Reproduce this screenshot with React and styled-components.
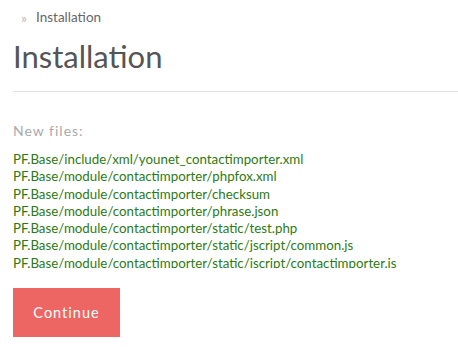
import styled, { createGlobalStyle } from 'styled-components';

const GlobalStyle = createGlobalStyle`
  html, body {
    margin: 0;
    padding: 0;
    background: #fff;
    font-family: Lato, "Open Sans", sans-serif;
    overflow: hidden;
  }
`;

const files = [
  'PF.Base/include/xml/younet_contactimporter.xml',
  'PF.Base/module/contactimporter/phpfox.xml',
  'PF.Base/module/contactimporter/checksum',
  'PF.Base/module/contactimporter/phrase.json',
  'PF.Base/module/contactimporter/static/test.php',
  'PF.Base/module/contactimporter/static/jscript/common.js',
  'PF.Base/module/contactimporter/static/jscript/contactimporter.js',
  'PF.Base/module/contactimporter/static/jscript/jquery.js',
];

const Page = styled.div`
  padding: 8px 0 0 13px;
`;

const Breadcrumb = styled.div`
  display: flex;
  align-items: center;
  gap: 9px;
  height: 18px;
  padding-left: 8px;
  font-size: 13.5px;
  color: #666;
`;

const Chevron = styled.span`
  color: #bbb;
  font-size: 14px;
`;

const Title = styled.h1`
  margin: 10px 0 0;
  font-weight: 400;
  font-size: 31px;
  line-height: 40px;
  color: #555;
`;

const Rule = styled.hr`
  margin: 15px 0 0;
  border: 0;
  border-top: 1px solid #e4e4e4;
`;

const Label = styled.div`
  margin-top: 30px;
  font-size: 14px;
  letter-spacing: 1px;
  color: #aaa;
`;

const FileList = styled.div`
  margin-top: 12px;
  height: 117px;
  overflow: hidden;
`;

const FileRow = styled.div`
  font-size: 13.3px;
  line-height: 17.3px;
  color: #2d7a14;
  white-space: nowrap;
`;

const Button = styled.button`
  display: block;
  margin-top: 20px;
  width: 107px;
  height: 49px;
  border: 0;
  background: #ee6664;
  color: #fff;
  font-family: inherit;
  font-size: 14.5px;
  letter-spacing: 1px;
  cursor: pointer;
`;

export default function App() {
  return (
    <>
      <GlobalStyle />
      <Page>
        <Breadcrumb>
          <Chevron>»</Chevron>
          <span>Installation</span>
        </Breadcrumb>
        <Title>Installation</Title>
        <Rule />
        <Label>New files:</Label>
        <FileList>
          {files.map((f) => (
            <FileRow key={f}>{f}</FileRow>
          ))}
        </FileList>
        <Button>Continue</Button>
      </Page>
    </>
  );
}
